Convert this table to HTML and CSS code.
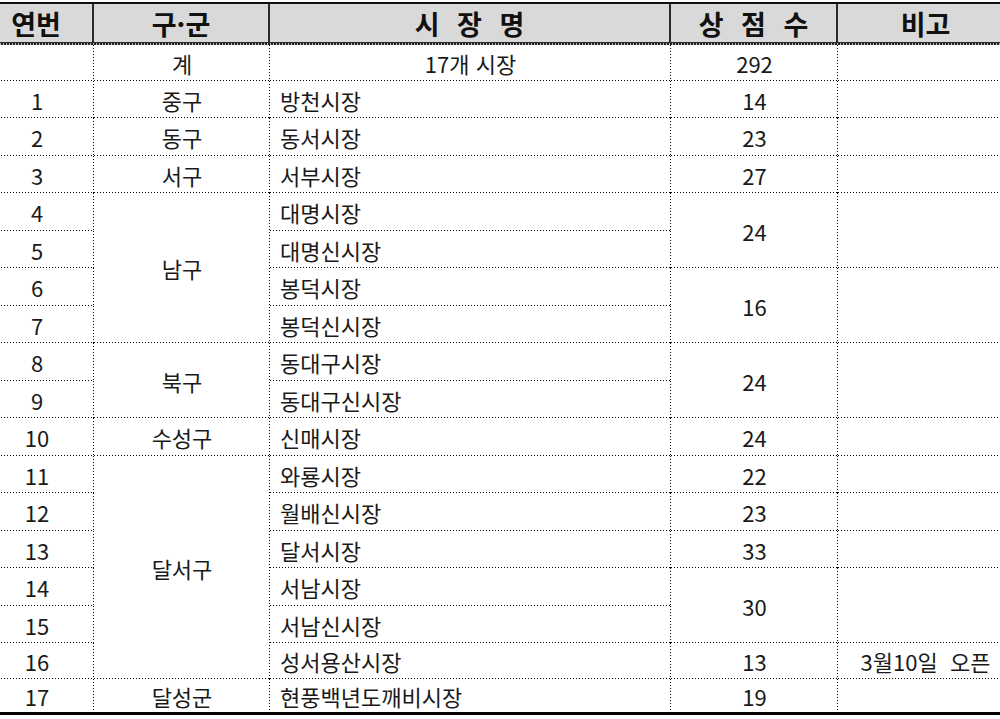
FILE: index.html
```html
<!DOCTYPE html>
<html lang="ko">
<head>
<meta charset="utf-8">
<title>시장 현황</title>
<link rel="stylesheet" href="styles.css">
</head>
<body>
<div class="sheet">
  <div class="th">연번</div>
  <div class="th">구·군</div>
  <div class="th spaced">시 장 명</div>
  <div class="th spaced">상 점 수</div>
  <div class="th c5">비고</div>
  <div class="sep"></div>

  <div class="td"></div><div class="td">계</div><div class="td">17개 시장</div><div class="td">292</div><div class="td c5"></div>

  <div class="td">1</div><div class="td">중구</div><div class="td name">방천시장</div><div class="td">14</div><div class="td c5"></div>
  <div class="td">2</div><div class="td">동구</div><div class="td name">동서시장</div><div class="td">23</div><div class="td c5"></div>
  <div class="td">3</div><div class="td">서구</div><div class="td name">서부시장</div><div class="td">27</div><div class="td c5"></div>

  <div class="td">4</div><div class="td rs4">남구</div><div class="td name">대명시장</div><div class="td rs2">24</div><div class="td c5 rs2"></div>
  <div class="td">5</div><div class="td name">대명신시장</div>
  <div class="td">6</div><div class="td name">봉덕시장</div><div class="td rs2">16</div><div class="td c5 rs2"></div>
  <div class="td">7</div><div class="td name">봉덕신시장</div>

  <div class="td">8</div><div class="td rs2">북구</div><div class="td name">동대구시장</div><div class="td rs2">24</div><div class="td c5 rs2"></div>
  <div class="td">9</div><div class="td name">동대구신시장</div>

  <div class="td">10</div><div class="td">수성구</div><div class="td name">신매시장</div><div class="td">24</div><div class="td c5"></div>

  <div class="td">11</div><div class="td rs6">달서구</div><div class="td name">와룡시장</div><div class="td">22</div><div class="td c5"></div>
  <div class="td">12</div><div class="td name">월배신시장</div><div class="td">23</div><div class="td c5"></div>
  <div class="td">13</div><div class="td name">달서시장</div><div class="td">33</div><div class="td c5"></div>
  <div class="td">14</div><div class="td name">서남시장</div><div class="td rs2">30</div><div class="td c5 rs2"></div>
  <div class="td">15</div><div class="td name">서남신시장</div>
  <div class="td">16</div><div class="td name">성서용산시장</div><div class="td">13</div><div class="td c5">3월10일&nbsp;&nbsp;오픈</div>

  <div class="td end">17</div><div class="td end">달성군</div><div class="td name end">현풍백년도깨비시장</div><div class="td end">19</div><div class="td c5 end"></div>
</div>
</body>
</html>
```

FILE: styles.css
```css
html, body {
  margin: 0;
  padding: 0;
  background: #ffffff;
  overflow: hidden;
}

body {
  font-family: "Noto Sans CJK KR", "Noto Sans", sans-serif;
  color: #1a1a1a;
}

.sheet {
  display: grid;
  grid-template-columns: 114px 176px 401px 167px 175px;
  grid-template-rows:
    39px 2px 36px
    37px 38px 37px 38px 37px 38px 37px
    38px 37px 38px 37px 38px 37px 38px
    37px 36px 33px;
  width: 1033px;
  margin: 2px 0 0 -20px;
  border-top: 2px solid #111;
  border-bottom: 3px solid #000;
}

.th {
  box-sizing: border-box;
  display: flex;
  align-items: center;
  justify-content: center;
  background: #d9d9d9;
  border-right: 2px solid #2a2a2a;
  border-bottom: 1px solid #2a2a2a;
  font-size: 27px;
  font-weight: 700;
  line-height: 1;
  color: #111;
}

.th.spaced {
  letter-spacing: 5px;
  padding-left: 5px;
}

.th.c5 {
  border-right: none;
}

.sep {
  grid-column: 1 / -1;
  background-image:
    repeating-linear-gradient(to right, #222 0 2px, #bbb 2px 3px);
}

.td {
  box-sizing: border-box;
  display: flex;
  align-items: center;
  justify-content: center;
  font-size: 22px;
  line-height: 1;
  color: #1a1a1a;
  background-image:
    repeating-linear-gradient(to bottom, #000 0 1px, transparent 1px 3px),
    repeating-linear-gradient(to right, #000 0 1px, transparent 1px 3px);
  background-size: 1px 100%, 100% 1px;
  background-position: right top, left bottom;
  background-repeat: no-repeat;
}

.td.name {
  justify-content: flex-start;
  padding-left: 10px;
}

.td.c5 {
  background-image:
    repeating-linear-gradient(to right, #000 0 1px, transparent 1px 3px);
  background-size: 100% 1px;
  background-position: left bottom;
}

.td.end {
  background-image:
    repeating-linear-gradient(to bottom, #000 0 1px, transparent 1px 3px);
  background-size: 1px 100%;
  background-position: right top;
}

.td.c5.end {
  background-image: none;
}

.rs2 { grid-row: span 2; }
.rs4 { grid-row: span 4; }
.rs6 { grid-row: span 6; }
```
